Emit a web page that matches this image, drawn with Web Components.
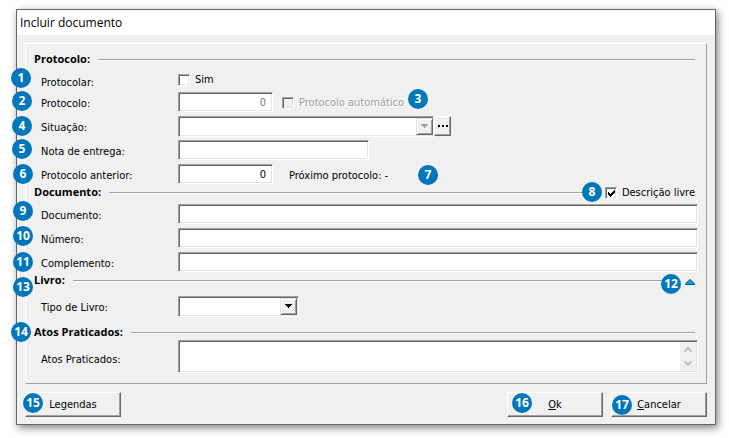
<!DOCTYPE html>
<html lang="pt-BR">
<head>
<meta charset="utf-8">
<title>Incluir documento</title>
<style>
  body { margin: 0; padding: 9px 13px 13px 16px; background: #fff; }
</style>
</head>
<body>
<protocol-dialog></protocol-dialog>

<script>
const BASE = `
  *, *::before, *::after { box-sizing: border-box; }
  input, select, textarea, button { font: inherit; color: inherit; margin: 0; border-radius: 0; outline: none; }
  .sunken {
    background: #fff; border: 1px solid; border-color: #a0a0a0 #fff #fff #a0a0a0;
    box-shadow: inset 1px 1px #696969, inset -1px -1px #e3e3e3;
  }
`;

function define(name, css, html, after) {
  const tpl = document.createElement('template');
  customElements.define(name, class extends HTMLElement {
    constructor() {
      super();
      this.attachShadow({ mode: 'open' });
    }
    connectedCallback() {
      if (this.shadowRoot.firstChild) return;
      tpl.innerHTML = `<style>${BASE}${css}</style>` + (typeof html === 'function' ? html(this) : html);
      this.shadowRoot.append(tpl.content.cloneNode(true));
      if (after) after(this);
    }
  });
}

/* Numbered callout pinned over the dialog */
define('callout-pin', `
  :host {
    position: absolute; width: 20px; height: 20px; border-radius: 50%;
    background: #0077ba; color: #fff; display: flex; align-items: center; justify-content: center;
    font: bold 12px/20px "Open Sans", "Noto Sans", sans-serif; pointer-events: none;
  }`, `<slot></slot>`,
  el => {
    for (const side of ['left', 'right', 'top'])
      if (el.hasAttribute(side)) el.style[side] = el.getAttribute(side) + 'px';
  });

/* Heading with an etched rule and room for a trailing control */
define('section-heading', `
  :host { display: flex; align-items: center; gap: 8px; height: 12px; padding-right: 3px; }
  h2 { margin: 0; font: bold 11px/12px "Open Sans", "Noto Sans", sans-serif; white-space: nowrap; }
  .rule { flex: 1; height: 2px; margin-top: 2px; background: #a0a0a0; border-bottom: 1px solid #fff; }
  ::slotted(check-box) { padding-top: 2px; }
`, `<h2><slot></slot></h2><span class="rule"></span><slot name="end"></slot>`);

/* Row base shared by every labelled field */
const ROW = `
  :host { display: grid; grid-template-columns: 144px 1fr; align-items: center; min-height: 24px; }
  .name { padding: 3px 0 0 7px; }
  .control { display: flex; align-items: center; }
`;

define('text-field', ROW + `
  input { width: var(--field-width, 100%); height: 20px; padding: 0 6px 0 4px; }
  :host([numeric]) input { text-align: right; }
  input:disabled { color: #777; }
`, el => `
  <label class="name" for="f">${el.getAttribute('label')}</label>
  <div class="control"><input class="sunken" id="f" type="text" value="${el.getAttribute('value') || ''}"
    ${el.hasAttribute('disabled') ? 'disabled' : ''}><slot></slot></div>`);

define('select-field', ROW + `
  .box { display: grid; width: var(--field-width); height: 21px; }
  select, .arrow { grid-area: 1 / 1; }
  select { appearance: none; width: 100%; height: 21px; padding: 0 20px 0 4px; opacity: 1; }
  .arrow {
    justify-self: end; align-self: center; width: 17px; height: 17px; margin-right: 2px; pointer-events: none;
    display: flex; align-items: center; justify-content: center; background: #f0f0f0;
    border: 1px solid; border-color: #e3e3e3 #696969 #696969 #e3e3e3;
    box-shadow: inset 1px 1px #fff, inset -1px -1px #a0a0a0;
  }
  :host([disabled]) .arrow { color: #a0a0a0; margin-right: 1px; }
`, el => `
  <label class="name" for="f">${el.getAttribute('label')}</label>
  <div class="control"><div class="box">
    <select class="sunken" id="f" ${el.hasAttribute('disabled') ? 'disabled' : ''}><option></option></select>
    <span class="arrow"><svg width="7" height="4" shape-rendering="crispEdges" fill="currentColor"><path d="M0 0h7v1h-1v1h-1v1h-1v1h-1v-1h-1v-1h-1v-1h-1z"/></svg></span>
  </div><slot></slot></div>`);

define('memo-field', ROW + `
  :host { padding-top: 2px; }
  .name { padding-top: 6px; }
  .box { display: grid; flex: 1; }
  textarea, .scroll { grid-area: 1 / 1; }
  textarea { display: block; resize: none; overflow: hidden; width: 100%; height: 33px; padding: 2px 20px 2px 4px; }
  .scroll {
    justify-self: end; width: 16px; margin: 2px; background: #f0f0f0; color: #bfbfbf;
    display: flex; flex-direction: column; align-items: center; justify-content: space-around;
  }
`, el => `
  <label class="name" for="f">${el.getAttribute('label')}</label>
  <div class="control"><div class="box"><textarea class="sunken" id="f"></textarea>
    <span class="scroll">
      <svg width="8" height="7" fill="none" stroke="currentColor" stroke-width="2"><path d="M.5 5.500L4 2l3.500 3.500"/></svg>
      <svg width="8" height="7" fill="none" stroke="currentColor" stroke-width="2"><path d="M.5 1.500L4 5l3.500-3.500"/></svg>
    </span></div></div>`);

define('check-box', `
  :host { display: inline-flex; }
  label { display: flex; align-items: center; gap: 5px; white-space: nowrap; }
  .mark { display: grid; }
  input, svg { grid-area: 1 / 1; }
  input { appearance: none; width: 12px; height: 12px; }
  svg { display: none; pointer-events: none; }
  input:checked + svg { display: block; }
  :host([disabled]) { color: #a0a0a0; text-shadow: 1px 1px #fff; }
  input:disabled { background: #f0f0f0; }
`, el => `<label><span class="mark">
    <input class="sunken" type="checkbox" ${el.hasAttribute('checked') ? 'checked' : ''} ${el.hasAttribute('disabled') ? 'disabled' : ''}>
    <svg width="12" height="12" shape-rendering="crispEdges"><path d="M3 5h1v1h1v1h1v-1h1v-1h1v-1h1v-1h1v3h-1v1h-1v1h-1v1h-1v1h-1v-1h-1v-1h-1z"/></svg>
  </span><span><slot></slot></span></label>`);

define('check-field', ROW + `
  :host { min-height: 22px; }
  .name { padding-top: 8px; }
  .control { padding-top: 2px; }
`, el => `<span class="name">${el.getAttribute('label')}</span><div class="control"><slot></slot></div>`);

define('push-button', `
  :host { display: block; width: 96px; height: 25px; }
  :host([compact]) { width: 17px; height: 20px; }
  button {
    width: 100%; height: 100%; padding: 0; background: #f0f0f0; display: flex; align-items: center; justify-content: center;
    border: 1px solid; border-color: #fff #696969 #696969 #fff; box-shadow: inset -1px -1px #a0a0a0;
  }
`, el => `<button type="button" aria-label="${el.getAttribute('name') || ''}"><span><slot></slot></span></button>`,
  el => { if (!el.hasAttribute('name')) el.shadowRoot.querySelector('button').removeAttribute('aria-label'); });

define('collapse-toggle', `
  :host { display: block; padding-top: 3px; }
  button { display: block; border: 0; padding: 0; background: none; }
  svg { display: block; }
`, `<button type="button" aria-label="Recolher"><svg width="10" height="6"><path d="M5 .5L9.500 4.500V5.500H.5V4.500Z" fill="#12a5dc" stroke="#075a86"/></svg></button>`);

define('protocol-dialog', `
  :host {
    display: block; position: relative; border: 1px solid #666; background: #f0f0f0; color: #000;
    font: 11px/14px "DejaVu Sans Condensed", "DejaVu Sans", sans-serif;
    box-shadow: 2px 3px 8px rgba(0,0,0,.5);
  }
  h1 { margin: 0; padding: 0 3px; height: 25px; background: #fff; font: 12px/25px "Open Sans", "Noto Sans", sans-serif; }
  .body { padding: 8px; padding-bottom: 7px; }
  .panel { border: 1px solid; border-color: #fff #a0a0a0 #a0a0a0 #fff; padding: 9px 8px 10px; }
  section + section { padding-top: var(--before, 0); }
  section-heading { margin-bottom: var(--after, 4px); }
  .spaced { --before: 8px; --after: 0px; }
  .auto { margin-left: 9px; padding-top: 2px; }
  .next { margin-left: 16px; padding-top: 3px; }
  footer { display: flex; gap: 8px; padding-top: 8px; }
  .grow { flex: 1; }
`, `
  <h1>Incluir documento</h1>
  <div class="body">
    <div class="panel">
      <section style="--after: 3px">
        <section-heading>Protocolo:</section-heading>
        <check-field label="Protocolar:"><check-box>Sim</check-box></check-field>
        <text-field label="Protocolo:" value="0" numeric disabled style="--field-width: 95px"><check-box class="auto" disabled>Protocolo automático</check-box></text-field>
        <select-field label="Situação:" disabled style="--field-width: 256px"><push-button compact name="Procurar situação"><svg width="12" height="2" style="display:block" shape-rendering="crispEdges"><path d="M1 0h2v2h-2zM5 0h2v2h-2zM9 0h2v2h-2z"/></svg></push-button></select-field>
        <text-field label="Nota de entrega:" style="--field-width: 191px"></text-field>
        <text-field label="Protocolo anterior:" value="0" numeric style="--field-width: 95px"><span class="next">Próximo protocolo: -</span></text-field>
      </section>
      <section>
        <section-heading>Documento:<check-box slot="end" checked>Descrição livre</check-box></section-heading>
        <text-field label="Documento:"></text-field>
        <text-field label="Número:"></text-field>
        <text-field label="Complemento:"></text-field>
      </section>
      <section style="--after: 8px">
        <section-heading>Livro:<collapse-toggle slot="end"></collapse-toggle></section-heading>
        <select-field label="Tipo de Livro:" style="--field-width: 121px"></select-field>
      </section>
      <section class="spaced">
        <section-heading>Atos Praticados:</section-heading>
        <memo-field label="Atos Praticados:"></memo-field>
      </section>
    </div>
    <footer>
      <push-button>Legendas</push-button><span class="grow"></span>
      <push-button><u>O</u>k</push-button>
      <push-button><u>C</u>ancelar</push-button>
    </footer>
  </div>
  <callout-pin left="-6" top="58">1</callout-pin>
  <callout-pin left="-5" top="81">2</callout-pin>
  <callout-pin left="391" top="79">3</callout-pin>
  <callout-pin left="-5" top="106">4</callout-pin>
  <callout-pin left="-5" top="129">5</callout-pin>
  <callout-pin left="-4" top="154">6</callout-pin>
  <callout-pin left="401" top="155">7</callout-pin>
  <callout-pin right="113" top="172">8</callout-pin>
  <callout-pin left="-4" top="191">9</callout-pin>
  <callout-pin left="-4" top="216">10</callout-pin>
  <callout-pin left="-4" top="242">11</callout-pin>
  <callout-pin right="34" top="264">12</callout-pin>
  <callout-pin left="-4" top="267">13</callout-pin>
  <callout-pin left="-6" top="312">14</callout-pin>
  <callout-pin left="6" top="383">15</callout-pin>
  <callout-pin right="183" top="383">16</callout-pin>
  <callout-pin right="83" top="385">17</callout-pin>
`);
</script>
</body>
</html>
